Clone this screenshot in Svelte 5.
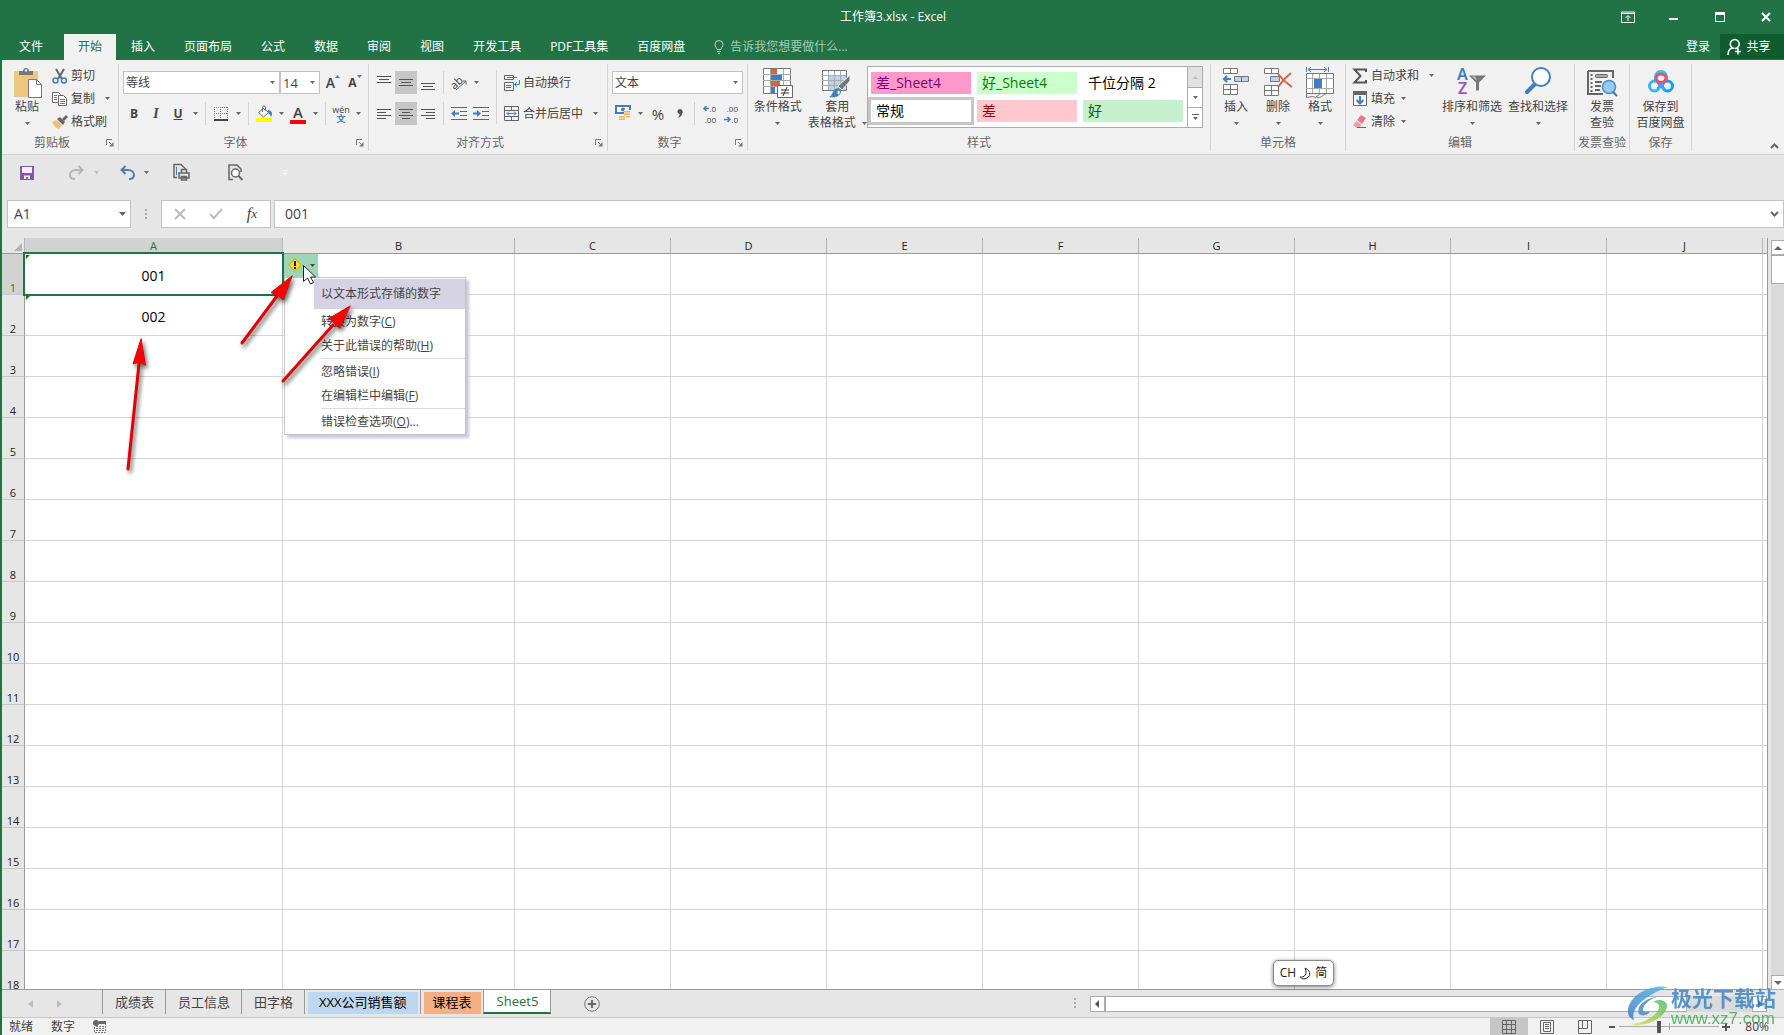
<script>
  const menuTabs = ['插入', '页面布局', '公式', '数据', '审阅', '视图', '开发工具', 'PDF工具集', '百度网盘'];
  const columns = ['A', 'B', 'C', 'D', 'E', 'F', 'G', 'H', 'I', 'J'];
  const rows = Array.from({ length: 18 }, (_, i) => i + 1);
  const cellStyles = [
    { name: '差_Sheet4', kind: 'bad-sheet' },
    { name: '好_Sheet4', kind: 'good-sheet' },
    { name: '千位分隔 2', kind: 'plain' },
    { name: '常规', kind: 'normal' },
    { name: '差', kind: 'bad' },
    { name: '好', kind: 'good' },
  ];
  const sheets = [
    { name: '成绩表', kind: '' },
    { name: '员工信息', kind: '' },
    { name: '田字格', kind: '' },
    { name: 'XXX公司销售额', kind: 'blue' },
    { name: '课程表', kind: 'orange' },
    { name: 'Sheet5', kind: '' },
  ];
  const errorItems = [
    { text: '转换为数字', key: 'C' },
    { text: '关于此错误的帮助', key: 'H', last: true },
    { text: '忽略错误', key: 'I' },
    { text: '在编辑栏中编辑', key: 'F', last: true },
    { text: '错误检查选项', key: 'O', more: '...' },
  ];

  let cells = $state({ A1: '001', A2: '002' });
  let activeSheet = $state('Sheet5');
  let zoom = $state(80);
  let menuOpen = $state(true);
</script>

{#snippet caret()}
  <svg class="caret" width="5" height="3" viewBox="0 0 5 3"><path d="M0 0h5L2.500 3z" fill="currentColor" /></svg>
{/snippet}

{#snippet launcher()}
  <button class="launcher" aria-label="更多">
    <svg width="8" height="8" viewBox="0 0 8 8"><path d="M.5 6V.5H6M3 3l3 3" fill="none" stroke="#777" /><path d="M7.500 3v4.500H3z" fill="#777" /></svg>
  </button>
{/snippet}

{#snippet lines(list)}
  <svg width="14" height="14" viewBox="0 0 14 14">
    {#each list as [x, y, w]}
      <rect {x} {y} width={w} height="1" fill="#555" />
    {/each}
  </svg>
{/snippet}

<div class="excel">
  <header class="titlebar">
    <span></span>
    <h1>工作簿3.xlsx - Excel</h1>
    <div class="window-buttons">
      <button aria-label="功能区显示选项"><svg width="14" height="12" viewBox="0 0 14 12" fill="none" stroke="#fff"><path d="M.5 1h13v10.500H.5zM0 2.500h14M7 10V5M4.500 7 7 4.500 9.500 7" /></svg></button>
      <button aria-label="最小化"><svg width="14" height="12" viewBox="0 0 14 12"><path d="M2 7h9v2H2z" fill="#fff" /></svg></button>
      <button aria-label="最大化"><svg width="14" height="12" viewBox="0 0 14 12"><path d="M2.500 1.500h9v9h-9z" fill="none" stroke="#fff" /><path d="M2 1h10v3H2z" fill="#fff" /></svg></button>
      <button aria-label="关闭"><svg width="14" height="12" viewBox="0 0 14 12"><path d="M3 2l8 8M11 2l-8 8" stroke="#fff" stroke-width="2" /></svg></button>
    </div>
  </header>

  <nav class="tabs">
    <button class="file">文件</button>
    <button class="active">开始</button>
    {#each menuTabs as tab}
      <button>{tab}</button>
    {/each}
    <button class="tell">
      <svg width="10" height="14" viewBox="0 0 10 14" fill="none" stroke="#b7d3c3"><path d="M3 9.500C3 7.500 1 7 1 4.500a4 4 0 0 1 8 0C9 7 7 7.500 7 9.500zM3 11.500h4M4 13.500h2" /></svg>
      告诉我您想要做什么...
    </button>
    <button class="login">登录</button>
    <button class="share">
      <svg width="15" height="18" viewBox="0 0 15 18" fill="none" stroke="#fff" stroke-width="1.500"><path d="M7.500 10.500a4.500 4.500 0 1 1 .5 0M5 10c-3 1-4 3-4 7M10 9.500l1 1M11 10.500v6M8 13.500h6" /></svg>
      共享
    </button>
  </nav>

  <section class="ribbon">
    <div class="group clipboard">
      <div class="body">
        <button class="large">
          <svg width="28" height="32" viewBox="-1 0 28 32">
            <path d="M0 4h24v26H0z" fill="#edc87e" /><path d="M5 8V4h4c0-4 6-4 6 0h4v4z" fill="#777" /><circle cx="12" cy="3.500" r="1.200" fill="#f1f1f1" />
            <path d="M14.500 12.500h8l5 5v13h-13z" fill="#fff" stroke="#777" /><path d="M22.500 12.500v5h5" fill="none" stroke="#777" />
          </svg>
          <span>粘贴</span>
          <span>{@render caret()}</span>
        </button>
        <div class="stack">
          <button class="small">
            <svg width="16" height="16" viewBox="0 0 16 16"><path d="M4 1l6 10M12 1L6 11" stroke="#666" stroke-width="2" /><circle cx="3.500" cy="12.500" r="2.500" fill="none" stroke="#3f7fc0" stroke-width="1.500" /><circle cx="12" cy="12.500" r="2.500" fill="none" stroke="#3f7fc0" stroke-width="1.500" /></svg>
            剪切
          </button>
          <button class="small">
            <svg width="16" height="16" viewBox="0 0 16 16"><path d="M.5 1.500h6l2 2v8h-8z" fill="#fff" stroke="#666" /><path d="M2 4.500h3M2 6.500h3M2 8.500h3" stroke="#3f7fc0" /><path d="M6.500 4.500h5l3 3v7h-8z" fill="#fff" stroke="#666" /><path d="M8 8.500h5M8 10.500h5M8 12.500h5" stroke="#3f7fc0" /></svg>
            复制 <i class="wide-caret">{@render caret()}</i>
          </button>
          <button class="small">
            <svg width="16" height="16" viewBox="0 0 16 16"><path d="M0 8l4-2 6 5-3 4c-2 0-5-3-7-7z" fill="#edc07a" /><path d="M5 5l3-2 5 5-2 3z" fill="#666" /><path d="M10 5l4-4 2 2-4 4z" fill="#666" /></svg>
            格式刷
          </button>
        </div>
      </div>
      <div class="label"><span>剪贴板</span>{@render launcher()}</div>
    </div>

    <div class="group font">
      <div class="body two">
        <div class="row">
          <label class="combo face"><select aria-label="字体"><option>等线</option></select>{@render caret()}</label>
          <label class="combo size"><select aria-label="字号"><option>14</option></select>{@render caret()}</label>
          <button class="icon grow" aria-label="增大字号"><b>A</b><svg width="5" height="3" viewBox="0 0 5 3"><path d="M0 3h5L2.500 0z" fill="#3f7fc0" /></svg></button>
          <button class="icon shrink" aria-label="减小字号"><b>A</b><svg width="5" height="3" viewBox="0 0 5 3"><path d="M0 0h5L2.500 3z" fill="#3f7fc0" /></svg></button>
        </div>
        <div class="row">
          <button class="icon"><b>B</b></button>
          <button class="icon"><b class="italic">I</b></button>
          <button class="icon"><b class="under">U</b></button>
          <button class="drop" aria-label="下划线">{@render caret()}</button>
          <i class="sep"></i>
          <button class="icon" aria-label="边框"><svg width="14" height="14" viewBox="0 0 14 14"><path d="M.5 0v13M13.500 0v13M0 .5h14M6.500 0v13M0 6.500h14" stroke="#777" stroke-dasharray="1 1" /><path d="M0 13h14" stroke="#444" stroke-width="2" /></svg></button>
          <button class="drop" aria-label="边框样式">{@render caret()}</button>
          <i class="sep"></i>
          <button class="icon" aria-label="填充颜色"><svg width="17" height="16" viewBox="0 0 17 16"><path d="M2.500 6.500l5-4 5 4-5 4.500z" fill="#fff" stroke="#666" /><path d="M6.500 6V1.500c0-2 3-2 3 0V4" fill="none" stroke="#666" /><path d="M12 4c4 0 5 4 3 7-1-2-1-3-3-4z" fill="#3f7fc0" /><path d="M0 12h16v4H0z" fill="#ff0" /></svg></button>
          <button class="drop" aria-label="选择填充颜色">{@render caret()}</button>
          <button class="icon color" aria-label="字体颜色"><b>A</b></button>
          <button class="drop" aria-label="选择字体颜色">{@render caret()}</button>
          <i class="sep"></i>
          <button class="icon pinyin"><small>wén</small><small>文</small></button>
          <button class="drop" aria-label="拼音">{@render caret()}</button>
        </div>
      </div>
      <div class="label"><span>字体</span>{@render launcher()}</div>
    </div>

    <div class="group align">
      <div class="body">
        <div class="two">
          <div class="row">
            <button class="icon" aria-label="顶端对齐">{@render lines([[0, 0, 14], [2, 3, 10], [0, 6, 14]])}</button>
            <button class="icon on" aria-label="垂直居中">{@render lines([[0, 3, 14], [2, 6, 10], [0, 9, 14]])}</button>
            <button class="icon" aria-label="底端对齐">{@render lines([[0, 7, 14], [2, 10, 10], [0, 13, 14]])}</button>
            <i class="sep"></i>
            <button class="icon" aria-label="方向"><svg width="18" height="16" viewBox="0 0 18 16"><text x="0" y="12" transform="rotate(-42 6 8)" font-size="11" font-family="Noto Sans, sans-serif" fill="#444">ab</text><path d="M6 15L16 6M12.500 6H16v3.500" fill="none" stroke="#666" /></svg></button>
            <button class="drop" aria-label="文字方向">{@render caret()}</button>
          </div>
          <div class="row">
            <button class="icon" aria-label="左对齐">{@render lines([[0, 2, 14], [0, 5, 9], [0, 8, 14], [0, 11, 9]])}</button>
            <button class="icon on" aria-label="居中">{@render lines([[0, 2, 14], [3, 5, 8], [0, 8, 14], [3, 11, 8]])}</button>
            <button class="icon" aria-label="右对齐">{@render lines([[0, 2, 14], [5, 5, 9], [0, 8, 14], [5, 11, 9]])}</button>
            <i class="sep"></i>
            <button class="icon" aria-label="减少缩进"><svg width="16" height="14" viewBox="0 0 16 14"><path d="M0 .5h16M9 4.500h7M9 8.500h7M0 12.500h16" stroke="#666" /><path d="M0 6.500l4-3.500v2.500h4v2H4V10z" fill="#3f7fc0" /></svg></button>
            <button class="icon" aria-label="增加缩进"><svg width="16" height="14" viewBox="0 0 16 14"><path d="M0 .5h16M9 4.500h7M9 8.500h7M0 12.500h16" stroke="#666" /><path d="M8 6.500L4 3v2.500H0v2h4V10z" fill="#3f7fc0" /></svg></button>
          </div>
        </div>
        <i class="sep tall"></i>
        <div class="two">
          <button class="small">
            <svg width="16" height="16" viewBox="0 0 16 16" fill="none" stroke="#666"><path d="M.5.5h9v4h-9zM.5 7.500h9v8h-9zM2 10.500h5M2 12.500h5" /><path d="M3 2.500h10M15.500 5v4.500h-5M13 7l-2.500 2.500L13 12" stroke="#3f7fc0" /></svg>
            自动换行
          </button>
          <button class="small">
            <svg width="16" height="16" viewBox="0 0 16 16" fill="none" stroke="#666"><path d="M.5.5h14v14H.5zM0 4.500h15M0 10.500h15M7.500 1v3M7.500 11v3" /><path d="M3 7.500h9M5 5.500l-2 2 2 2M10 5.500l2 2-2 2" stroke="#3f7fc0" /></svg>
            合并后居中 <i class="wide-caret">{@render caret()}</i>
          </button>
        </div>
      </div>
      <div class="label"><span>对齐方式</span>{@render launcher()}</div>
    </div>

    <div class="group number">
      <div class="body two">
        <label class="combo"><select aria-label="数字格式"><option>文本</option></select>{@render caret()}</label>
        <div class="row">
          <button class="icon" aria-label="会计数字格式"><svg width="17" height="17" viewBox="0 0 17 17"><path d="M0 0h16v9H0z" fill="#3f7fc0" /><path d="M2 2h12v5H2z" fill="#fff" /><circle cx="8" cy="4.500" r="2" fill="#3f7fc0" /><path d="M9 5h7v6H9zM4 10h7v6H4z" fill="#f1f1f1" /><path d="M9 6h6v1.500H9zM9 8.500h6V10H9zM4 11h6v1.500H4zM4 13.500h6V15H4zM11 11h4v1.500h-4z" fill="#e3b45f" /></svg></button>
          <button class="drop" aria-label="货币">{@render caret()}</button>
          <button class="icon percent">%</button>
          <button class="icon comma" aria-label="千位分隔样式"><svg width="6" height="10" viewBox="0 0 6 10"><circle cx="3" cy="2.500" r="2.500" fill="#555" /><path d="M5.500 2.500C5.500 6 4 8 1 9c1-1.500 2-3 1.500-4.500z" fill="#555" /></svg></button>
          <i class="sep"></i>
          <button class="icon decimals" aria-label="增加小数位数"><span><svg width="6" height="7" viewBox="0 0 6 7"><path d="M6 3.500H1M3.500 1L1 3.500 3.500 6" stroke="#3f7fc0" fill="none" stroke-width="1.500" /></svg>.0</span><span>.00</span></button>
          <button class="icon decimals" aria-label="减少小数位数"><span>.00</span><span><svg width="7" height="7" viewBox="0 0 7 7"><path d="M0 3.500h5M3.500 1L6 3.500 3.500 6" stroke="#3f7fc0" fill="none" stroke-width="1.500" /></svg>.0</span></button>
        </div>
      </div>
      <div class="label"><span>数字</span>{@render launcher()}</div>
    </div>

    <div class="group styles">
      <div class="body">
        <button class="large">
          <svg width="30" height="32" viewBox="0 0 30 32">
            <path d="M.5 1.500h27v25H.5z" fill="#fff" stroke="#777" />
            <path d="M0 7.500h28M0 13.500h28M0 19.500h28M7.500 2v24M20.500 2v24" stroke="#aaa" />
            <path d="M8 2h6v5H8zM8 14h9v5H8z" fill="#db6141" /><path d="M8 8h11v5H8zM8 20h4v6H8z" fill="#3f7fc0" />
            <path d="M14.500 18.500h15v12h-15z" fill="#fff" stroke="#666" /><path d="M18 23h8M18 26h8M24 20l-4 9" stroke="#333" />
          </svg>
          <span>条件格式</span>
          <span>{@render caret()}</span>
        </button>
        <button class="large table-format">
          <svg width="30" height="32" viewBox="0 0 30 32">
            <path d="M.5 3.500h24v20H.5z" fill="#fff" stroke="#777" /><path d="M7 8h17v15H7z" fill="#bdd3ea" />
            <path d="M0 8.500h24M0 13.500h24M0 18.500h24M6.500 4v19M12.500 4v19M18.500 4v19" stroke="#aaa" />
            <path d="M28 8v6l-8 9-4-4z" fill="#777" stroke="#f1f1f1" /><path d="M7 30c4-1 3-8 9-9 4 1 4 6 0 8-3 2-6 1-9 1z" fill="#3f7fc0" /><path d="M16 24c1 1 1 2 0 3" stroke="#fff" fill="none" stroke-width="2" />
          </svg>
          <span>套用</span>
          <span>表格格式 {@render caret()}</span>
        </button>
        <div class="gallery">
          <div class="swatches">
            {#each cellStyles as style}
              <button class="swatch {style.kind}">{style.name}</button>
            {/each}
          </div>
          <div class="gallery-nav">
            <button disabled aria-label="上一行"><svg width="5" height="3" viewBox="0 0 5 3"><path d="M0 3h5L2.500 0z" fill="#bbb" /></svg></button>
            <button aria-label="下一行">{@render caret()}</button>
            <button aria-label="其他"><svg width="7" height="7" viewBox="0 0 7 7"><path d="M0 0h7v1H0zM1 3h5L3.500 6z" fill="#666" /></svg></button>
          </div>
        </div>
      </div>
      <div class="label"><span>样式</span></div>
    </div>

    <div class="group cells">
      <div class="body">
        <button class="large">
          <svg width="28" height="32" viewBox="0 0 28 32" fill="#fff" stroke="#777"><path d="M1.500 1.500h14v5h-14zM8.500 1.500v5M1.500 17.500h14v10h-14zM8.500 17.500v10M1.500 22.500h14" /><path d="M12.500 9.500h14v5h-14zM19.500 9.500v5" fill="#bdd3ea" /><path d="M2 12h7M5 9l-3 3 3 3" stroke="#3f7fc0" stroke-width="2" fill="none" /></svg>
          <span>插入</span>
          <span>{@render caret()}</span>
        </button>
        <button class="large">
          <svg width="30" height="32" viewBox="0 0 30 32" fill="#fff" stroke="#777"><path d="M1.500 1.500h14v5h-14zM8.500 1.500v5M1.500 18.500h14v10h-14zM8.500 18.500v10M1.500 23.500h14" /><path d="M7.500 9.500h9v5h-9z" fill="#bdd3ea" /><path d="M15 7c4 5 8 9 14 13M28 6c-5 4-9 8-13 14" stroke="#db6141" stroke-width="2" fill="none" /></svg>
          <span>删除</span>
          <span>{@render caret()}</span>
        </button>
        <button class="large">
          <svg width="28" height="32" viewBox="0 0 28 32" fill="#fff" stroke="#777"><path d="M.5 6.500h27v20H.5z" /><path d="M0 11.500h28M0 21.500h28M6.500 7v19M20.500 7v19M13.500 7v19" stroke="#aaa" fill="none" /><path d="M8 12h8v9H8z" fill="#3f7fc0" stroke="none" /><path d="M.5 26.500v4l6-1 3 1 4-3M10.500 30.500c5 1 6-3 9-3" fill="none" /><path d="M.5 0v5M22.500 0v5M2 2.500h19M5 0L2 2.500 5 5M18 0l3 2.500L18 5" stroke="#3f7fc0" fill="none" /></svg>
          <span>格式</span>
          <span>{@render caret()}</span>
        </button>
      </div>
      <div class="label"><span>单元格</span></div>
    </div>

    <div class="group editing">
      <div class="body">
        <div class="stack">
          <button class="small"><svg width="16" height="16" viewBox="0 0 16 16"><path d="M14 4V1.500H2.500L8.500 8l-6 6.500H14V12" fill="none" stroke="#555" stroke-width="2" /></svg>自动求和 <i class="wide-caret">{@render caret()}</i></button>
          <button class="small"><svg width="16" height="16" viewBox="0 0 16 16"><path d="M1.500 1.500h13v13h-13z" fill="#fff" stroke="#666" /><path d="M1 0h14v4H1z" fill="#666" /><path d="M8 5v7M4.500 9L8 12.500 11.500 9" fill="none" stroke="#3f7fc0" stroke-width="2" /></svg>填充 <i>{@render caret()}</i></button>
          <button class="small"><svg width="16" height="16" viewBox="0 0 16 16"><path d="M9 1l5 3-4 6-5-4z" fill="#e8788c" /><path d="M4.500 7l5 4-2 2.500H4L1 11z" fill="#eba0ae" /><path d="M5 13.500h9" stroke="#666" /></svg>清除 <i>{@render caret()}</i></button>
        </div>
        <button class="large">
          <svg width="30" height="32" viewBox="0 0 30 32"><g font-family="Noto Sans, sans-serif" font-size="16" font-weight="600"><text x="0" y="13" fill="#3f7fc0">A</text><text x="1" y="27" fill="#9b57b8">Z</text></g><path d="M12 8.500h17l-7 7v8h-3v-8z" fill="#777" /><path d="M15 9.500h3l2 4z" fill="#ccc" /></svg>
          <span>排序和筛选</span>
          <span>{@render caret()}</span>
        </button>
        <button class="large">
          <svg width="30" height="32" viewBox="0 0 30 32"><path d="M12 17L4 25" stroke="#3f7fc0" stroke-width="4" stroke-linecap="round" /><circle cx="18" cy="10" r="9" fill="#fff" stroke="#3f7fc0" stroke-width="2" /></svg>
          <span>查找和选择</span>
          <span>{@render caret()}</span>
        </button>
      </div>
      <div class="label"><span>编辑</span></div>
    </div>

    <div class="group invoice">
      <div class="body">
        <button class="large">
          <svg width="32" height="32" viewBox="0 0 32 32" fill="none" stroke="#666"><path d="M2 4h25v7M2 4v23h15" stroke-width="2" /><path d="M5.500 7v18" stroke-dasharray="2 2" stroke-width="2" /><rect x="9.500" y="7.500" width="12" height="3" rx="1" fill="#aaa" /><path d="M9 15h7M9 19h6M9 23h5" stroke-width="2" /><circle cx="23" cy="20" r="6.500" fill="#9ac8f5" stroke="#4a8fc7" stroke-width="1.500" /><path d="M27 25l4 4" stroke="#4a6f9a" stroke-width="2" /></svg>
          <span>发票</span>
          <span>查验</span>
        </button>
      </div>
      <div class="label"><span>发票查验</span></div>
    </div>

    <div class="group save">
      <div class="body">
        <button class="large">
          <svg width="28" height="32" viewBox="0 0 28 32" fill="none" stroke-width="3"><circle cx="7.500" cy="19" r="5" stroke="#35b5f3" /><circle cx="20.500" cy="19" r="5" stroke="#149df6" /><path d="M11 15.500l7 7.500M17 15.500L10.500 22" stroke="#36aaf2" /><path d="M8.500 13V10a5.500 5.500 0 0 1 11 0v3" stroke="#2ac4f2" /><path d="M9 11c1 6 9 6 10 0a5 4 0 0 0-10 0" stroke="#ef4d6c" /></svg>
          <span>保存到</span>
          <span>百度网盘</span>
        </button>
      </div>
      <div class="label"><span>保存</span></div>
    </div>
    <button class="collapse" aria-label="折叠功能区"><svg width="9" height="6" viewBox="0 0 9 6"><path d="M1 5l3.500-3.500L8 5" fill="none" stroke="#666" stroke-width="2" /></svg></button>
  </section>

  <div class="quick">
    <button aria-label="保存"><svg width="16" height="16" viewBox="0 0 16 16"><path d="M1 1h14v14H1z" fill="#8a55ae" /><path d="M3 2h10v6H3zM5 10.500h6V14H9v-2H7v2H5z" fill="#f4eef8" /></svg></button>
    <button class="redo" aria-label="恢复"><svg width="16" height="14" viewBox="0 0 16 14"><path d="M13 4H7C3 4 1 6.500 1 9s2 4 5 4M9.500 0l4 4-4 4" fill="none" stroke="#b5b5b5" stroke-width="2" /></svg>{@render caret()}</button>
    <button class="undo" aria-label="撤消"><svg width="16" height="14" viewBox="0 0 16 14"><path d="M3 4h6c4 0 6 2.500 6 5s-2 4-5 4M6.500 0l-4 4 4 4" fill="none" stroke="#4a7fb8" stroke-width="2" /></svg>{@render caret()}</button>
    <button class="print" aria-label="快速打印"><svg width="18" height="17" viewBox="0 0 18 17" fill="none" stroke="#666"><path d="M4 13.500H1V.500h7l4 4V7" stroke-width="1.500" /><path d="M3.500 3v8" stroke="#3f7fc0" /><path d="M6 9h10v5H6zM8.500 5.500h5V9h-5zM8.500 12.500h5v3.500h-5z" fill="#e6e6e6" stroke-width="1.500" /></svg></button>
    <button class="preview" aria-label="打印预览"><svg width="16" height="17" viewBox="0 0 16 17" fill="none" stroke="#666"><path d="M5 15.500H1V1h8l4 4v3" stroke-width="1.500" /><circle cx="7.500" cy="9" r="4" fill="#fff" stroke-width="1.500" /><path d="M10.500 12l4 4" stroke-width="2" /></svg></button>
    <button class="more" aria-label="自定义快速访问工具栏"><svg width="6" height="6" viewBox="0 0 6 6"><path d="M0 0h6v1H0zM0 2.500h6L3 5.500z" fill="#f4f4f4" /></svg></button>
  </div>

  <div class="formula">
    <label class="combo name"><input aria-label="名称框" value="A1" /><svg class="caret" width="7" height="4" viewBox="0 0 7 4"><path d="M0 0h7L3.500 4z" fill="#666" /></svg></label>
    <svg class="grip" width="2" height="11" viewBox="0 0 2 11"><path d="M0 0h2v2H0zM0 4h2v2H0zM0 8h2v2H0z" fill="#aaa" /></svg>
    <div class="entry">
      <button aria-label="取消"><svg width="12" height="12" viewBox="0 0 12 12"><path d="M1 1l10 10M11 1L1 11" stroke="#bbb" stroke-width="2" /></svg></button>
      <button aria-label="输入"><svg width="14" height="12" viewBox="0 0 14 12"><path d="M1 6l4 4 8-9" fill="none" stroke="#bbb" stroke-width="2" /></svg></button>
      <button class="fx">f<small>x</small></button>
    </div>
    <label class="combo value"><input aria-label="编辑栏" bind:value={cells.A1} /><svg class="caret" width="9" height="6" viewBox="0 0 9 6"><path d="M1 1l3.500 3.500L8 1" fill="none" stroke="#666" stroke-width="2" /></svg></label>
  </div>

  <main class="sheet">
    <div class="grid">
      <table>
        <colgroup>
          <col class="c-head" />
          {#each columns as col}
            <col class="c-{col}" />
          {/each}
          <col />
        </colgroup>
        <thead>
          <tr>
            <th class="corner"><svg width="8" height="8" viewBox="0 0 8 8"><path d="M8 0v8H0z" fill="#b5b5b5" /></svg></th>
            {#each columns as col}
              <th class:current={col === 'A'}>{col}</th>
            {/each}
            <th></th>
          </tr>
        </thead>
        <tbody>
          {#each rows as row}
            <tr>
              <th class:current={row === 1}>{row}</th>
              {#each columns as col}
                <td class:selected={col + row === 'A1'} class:text-number={cells[col + row]}>
                  {cells[col + row] ?? ''}
                  {#if col + row === 'B1'}
                    <div class="tag">
                      <button class="tag-button" aria-label="错误检查" onclick={() => (menuOpen = !menuOpen)}>
                        <svg width="14" height="14" viewBox="0 0 14 14"><path d="M7 .7L13.300 7 7 13.300.7 7z" fill="#fddb26" stroke="#d9a400" /><path d="M6 3h2v5H6zM6 9h2v2H6z" fill="#222" /></svg>
                        {@render caret()}
                      </button>
                      {#if menuOpen}
                        <div class="menu">
                          <div class="menu-title">以文本形式存储的数字</div>
                          {#each errorItems as item}
                            <button class:last={item.last}>{item.text}(<u>{item.key}</u>){item.more ?? ''}</button>
                          {/each}
                        </div>
                      {/if}
                    </div>
                  {/if}
                </td>
              {/each}
              <td></td>
            </tr>
          {/each}
        </tbody>
      </table>
    </div>
    <div class="vscroll">
      <button aria-label="向上滚动"><svg width="8" height="4" viewBox="0 0 8 4"><path d="M0 4h8L4 0z" fill="#666" /></svg></button>
      <div class="thumb"></div>
      <button class="end" aria-label="向下滚动"><svg width="8" height="4" viewBox="0 0 8 4"><path d="M0 0h8L4 4z" fill="#666" /></svg></button>
    </div>

    <!-- mouse pointer and red arrows drawn on top of the cells -->
    <svg class="arrows" width="380" height="240" viewBox="0 0 380 240">
      <path d="M301.500 27.500v16l4-3.500 3 6 3-1.500-3-5.500h5z" fill="#fff" stroke="#222" />
      <g class="red" fill="#f00" stroke="#e00000" stroke-width="3" stroke-linecap="round">
        <path d="M240 105L275 58M281 143L331 87M126 231L137 126" />
        <path d="M290 38l-21 16.500 6 2.500 1.500 1 4.500 3.500zM348 68l-21 12.500 5 4.500 5.500 5zM139 101l-8 25 6-2 6 3z" stroke-width="1" />
      </g>
    </svg>
    <div class="ime">CH <svg width="11" height="13" viewBox="0 0 11 13"><path d="M5 1c7 3 6 10-1 11-2 0-3-1-4-2 4 1 8-3 5-9z" fill="none" stroke="#222" /></svg> 简</div>
  </main>

  <div class="sheetbar">
    <div class="sheet-nav">
      <button aria-label="上一个工作表"><svg width="5" height="8" viewBox="0 0 5 8"><path d="M5 0v8L0 4z" fill="#bdbdbd" /></svg></button>
      <button aria-label="下一个工作表"><svg width="5" height="8" viewBox="0 0 5 8"><path d="M0 0v8l5-4z" fill="#bdbdbd" /></svg></button>
    </div>
    {#each sheets as sheet}
      <button class="sheet-tab {sheet.kind}" class:active={sheet.name === activeSheet} onclick={() => (activeSheet = sheet.name)}><span>{sheet.name}</span></button>
    {/each}
    <button class="add" aria-label="新工作表"><svg width="16" height="16" viewBox="0 0 16 16"><circle cx="8" cy="8" r="7.300" fill="none" stroke="#777" /><path d="M4 8h8M8 4v8" stroke="#666" stroke-width="2" /></svg></button>
    <svg class="grip push" width="2" height="11" viewBox="0 0 2 11"><path d="M0 0h2v2H0zM0 4h2v2H0zM0 8h2v2H0z" fill="#aaa" /></svg>
    <div class="hscroll">
      <button aria-label="向左滚动"><svg width="4" height="8" viewBox="0 0 4 8"><path d="M4 0v8L0 4z" fill="#555" /></svg></button>
      <div class="thumb"></div>
      <button class="end" aria-label="向右滚动"><svg width="4" height="8" viewBox="0 0 4 8"><path d="M0 0v8l4-4z" fill="#555" /></svg></button>
    </div>
  </div>

  <footer class="status">
    <span>就绪</span>
    <span>数字</span>
    <svg width="13" height="13" viewBox="0 0 13 13"><circle cx="3" cy="3" r="3" fill="#666" /><path d="M6 1h7v3H6z" fill="#666" /><path d="M1.500 7v5.500h11V4M3 6.500h8M3 8.500h8M3 10.500h8" fill="none" stroke="#777" stroke-dasharray="2 1" /></svg>
    <div class="views">
      <button class="on" aria-label="普通"><svg width="14" height="14" viewBox="0 0 14 14" fill="none" stroke="#666"><path d="M.5.5h13v13H.5zM.5 4.500h13M.5 9.500h13M4.500.5v13M9.500.5v13" /></svg></button>
      <button aria-label="页面布局"><svg width="14" height="14" viewBox="0 0 14 14" fill="none" stroke="#666"><path d="M.5.5h13v13H.5zM3.500 2.500h7v9h-7zM5 4.500h4M5 6.500h4M5 8.500h4" /></svg></button>
      <button aria-label="分页预览"><svg width="14" height="14" viewBox="0 0 14 14" fill="none" stroke="#666"><path d="M.5.5h13v13H.5zM1 8.500h8.500V1M4.500 1v7" /></svg></button>
    </div>
    <button class="step" aria-label="缩小"><svg width="8" height="8" viewBox="0 0 8 8"><path d="M1 3h6v2H1z" fill="#555" /></svg></button>
    <input type="range" min="10" max="190" aria-label="缩放" bind:value={zoom} />
    <button class="step" aria-label="放大"><svg width="8" height="8" viewBox="0 0 8 8"><path d="M0 3h8v2H0zM3 0h2v8H3z" fill="#555" /></svg></button>
    <span class="percent-value">{zoom}%</span>
  </footer>

  <div class="watermark">
    <svg width="42" height="42" viewBox="0 0 42 42">
      <defs>
        <linearGradient id="sky" x1="0" y1="1" x2="1" y2="0"><stop offset="0" stop-color="#3b7fc4" /><stop offset="1" stop-color="#5ebbe8" /></linearGradient>
        <linearGradient id="leaf" x1="0" y1="1" x2="1" y2="0"><stop offset="0" stop-color="#e8e04a" /><stop offset="1" stop-color="#4fb96f" /></linearGradient>
      </defs>
      <path d="M41 2C24-1 4 9 1 24c-1 7 3 10 6 11C3 24 17 11 41 2z" fill="url(#sky)" />
      <path d="M3 39c16 4 35-6 37-17 1-7-9-9-14-5 9 1 7 9 0 14-6 5-15 8-23 8z" fill="url(#leaf)" />
      <path d="M30 12c-12 1-21 9-18 17 3 3 10 1 11-3-5 2-8 1-7-2 1-5 7-10 14-12z" fill="#4a8fcb" />
    </svg>
    <div><strong>极光下载站</strong><em>www.xz7.com</em></div>
  </div>
</div>

<style>
  :global(body) {
    margin: 0;
  }
  .excel, .excel * {
    box-sizing: border-box;
  }
  .excel {
    position: relative;
    display: flex;
    flex-direction: column;
    height: 100vh;
    overflow: hidden;
    border-left: 2px solid #217346;
    background: #e6e6e6;
    color: #444;
    font: 12px/16px "Open Sans", "Noto Sans CJK SC", sans-serif;
    white-space: nowrap;
  }
  button, input, select {
    margin: 0;
    padding: 0;
    border: 0;
    background: none;
    color: inherit;
    font: inherit;
  }
  button {
    display: flex;
    align-items: center;
    justify-content: center;
  }
  svg {
    flex: none;
    display: block;
    overflow: visible;
  }
  i {
    font-style: normal;
  }
  .caret {
    color: #666;
  }

  /* title and tabs */
  .titlebar {
    display: grid;
    grid-template-columns: 1fr auto 1fr;
    align-items: center;
    height: 34px;
    background: #217346;
    color: #fff;
  }
  h1 {
    margin: 0;
    font-size: 12px;
    font-weight: 400;
  }
  .window-buttons {
    display: flex;
    justify-content: flex-end;
    padding-right: 11px;
    gap: 32px;
  }
  .tabs {
    display: flex;
    height: 26px;
    gap: 1px;
    background: #217346;
    color: #fff;
  }
  .tabs button {
    padding: 0 14px;
  }
  .tabs .file {
    padding: 0 20px 0 17px;
  }
  .tabs .active {
    background: #f1f1f1;
    color: #217346;
  }
  .tabs .tell {
    gap: 6px;
    color: #a6c9b5;
  }
  .tabs .login {
    margin-left: auto;
    padding: 0 9px;
  }
  .tabs .share {
    width: 64px;
    padding: 0 6px 0 0;
    gap: 4px;
    margin-bottom: 1px;
    background: #0e5c2f;
  }

  /* ribbon */
  .ribbon {
    display: flex;
    height: 95px;
    padding: 4px 0 3px;
    border-bottom: 1px solid #d2d2d2;
    background: #f1f1f1;
  }
  .group {
    display: flex;
    flex-direction: column;
    border-right: 1px solid #d4d4d4;
  }
  .body {
    flex: 1;
    display: flex;
  }
  .label {
    display: flex;
    align-items: center;
    height: 17px;
    padding: 1px 4px 0;
    color: #666;
  }
  .label span {
    flex: 1;
    text-align: center;
  }
  .label span:not(:only-child) {
    padding-right: 8px;
  }
  .clipboard { width: 117px; }
  .font { width: 250px; }
  .align { width: 239px; }
  .number { width: 140px; }
  .styles { width: 463px; }
  .cells { width: 135px; }
  .editing { width: 229px; }
  .invoice { width: 55px; }
  .save { width: 62px; }
  .invoice .label, .save .label {
    padding: 1px 0 0;
  }
  .large {
    flex-direction: column;
    justify-content: flex-start;
    padding-top: 3px;
  }
  .large span {
    display: flex;
    align-items: center;
    height: 16px;
    gap: 6px;
  }
  .clipboard .large {
    width: 50px;
  }
  .stack {
    display: flex;
    flex-direction: column;
  }
  .small {
    justify-content: flex-start;
    height: 23px;
    gap: 3px;
  }
  .small i {
    padding-left: 3px;
  }
  .small .wide-caret {
    padding-left: 7px;
  }
  .two {
    display: flex;
    flex-direction: column;
    gap: 8px;
    padding-top: 7px;
  }
  .font .body, .number .body, .align .body {
    padding-left: 4px;
  }
  .row {
    display: flex;
    height: 23px;
  }
  .icon {
    width: 22px;
  }
  .icon.on {
    background: #c6c6c6;
  }
  .drop {
    width: 12px;
  }
  .sep {
    width: 1px;
    margin: 0 4px;
    background: #d4d4d4;
  }
  .align .tall {
    margin: 6px 7px 10px 4px;
  }
  .combo {
    display: grid;
    align-items: center;
    height: 23px;
    border: 1px solid #c3c3c3;
    background: #fff;
  }
  .combo > :global(*) {
    grid-area: 1 / 1;
  }
  .combo select, .combo input {
    width: 100%;
    padding-left: 2px;
    appearance: none;
    outline: none;
  }
  .combo .caret {
    justify-self: end;
    margin-right: 4px;
    pointer-events: none;
  }
  .face {
    width: 157px;
  }
  .size {
    width: 40px;
    margin-right: 2px;
  }
  .size select {
    font-size: 13px;
  }
  .number .combo {
    width: 131px;
  }
  .grow, .shrink {
    align-items: flex-start;
    padding-top: 4px;
  }
  .grow b {
    font-size: 14px;
    font-weight: 600;
  }
  b.italic {
    font-family: "Liberation Serif", serif;
    font-size: 14px;
    font-style: italic;
  }
  b.under {
    text-decoration: underline;
  }
  .color b {
    height: 20px;
    width: 16px;
    border-bottom: 4px solid #f00;
    font-size: 15px;
    font-weight: 600;
    line-height: 16px;
  }
  .pinyin {
    flex-direction: column;
  }
  .pinyin small {
    font-size: 9px;
    line-height: 9px;
  }
  .pinyin small + small {
    color: #3f7fc0;
    font-weight: 700;
  }
  .percent {
    width: 24px;
    font-size: 15px;
  }
  .comma {
    width: 20px;
  }
  .decimals {
    flex-direction: column;
    align-items: flex-end;
    padding-right: 5px;
    font-size: 8px;
    line-height: 11px;
  }
  .decimals span {
    display: flex;
    align-items: center;
  }
  .styles .large {
    width: 60px;
  }
  .gallery {
    display: flex;
    height: 62px;
    margin: 2px 7px 0 auto;
    border: 1px solid #ababab;
    background: #fff;
  }
  .swatches {
    display: grid;
    grid-template-columns: repeat(3, 100px);
    grid-template-rows: 22px 22px;
    gap: 6px;
    padding: 5px 4px 5px 3px;
  }
  .swatch {
    justify-content: flex-start;
    padding-left: 5px;
    font-size: 14px;
    color: #000;
  }
  .bad-sheet { background: #ff99cc; color: #800080; }
  .good-sheet { background: #ccffcc; color: #008000; }
  .bad { background: #ffc7ce; color: #9c0006; }
  .good { background: #c6efce; color: #006100; }
  .normal { outline: 3px solid #c6c6c6; }
  .gallery-nav {
    display: grid;
    grid-template-rows: repeat(3, 1fr);
    width: 15px;
    border-left: 1px solid #ababab;
  }
  .gallery-nav button + button {
    border-top: 1px solid #ababab;
  }
  .gallery-nav button:disabled {
    background: #e1e1e1;
  }
  .cells .body {
    padding-left: 4px;
  }
  .cells .large {
    width: 42px;
  }
  .editing .stack {
    width: 93px;
    padding-left: 6px;
  }
  .editing .large {
    width: 66px;
  }
  .invoice .large, .save .large {
    flex: 1;
  }
  .collapse {
    align-self: flex-end;
    margin: 0 5px 2px auto;
  }

  /* quick access */
  .quick {
    display: flex;
    height: 35px;
    padding-left: 17px;
  }
  .quick button {
    gap: 9px;
  }
  .quick .redo {
    margin-left: 34px;
  }
  .quick .redo .caret {
    color: #bbb;
  }
  .quick .undo {
    margin-left: 20px;
  }
  .quick .print {
    margin-left: 24px;
  }
  .quick .preview {
    margin-left: 37px;
  }
  .quick .more {
    margin-left: 38px;
  }

  /* formula bar */
  .formula {
    display: flex;
    align-items: center;
    margin: 10px 0 10px 5px;
    color: #444;
    font-size: 14px;
  }
  .formula .combo {
    height: 28px;
  }
  .formula .name {
    width: 124px;
  }
  .formula .combo input {
    padding-left: 6px;
  }
  .formula .value input {
    padding-left: 10px;
  }
  .grip {
    margin: 0 14px;
  }
  .entry {
    display: flex;
    width: 110px;
    height: 28px;
    margin-right: 3px;
    border: 1px solid #c3c3c3;
    background: #fff;
  }
  .entry button {
    flex: 1;
  }
  .entry .fx {
    font: italic 400 16px/16px "Liberation Serif", serif;
  }
  .formula .value {
    flex: 1;
  }

  /* cells */
  .sheet {
    position: relative;
    flex: 1;
    display: flex;
    min-height: 0;
  }
  .grid {
    flex: 1;
    overflow: hidden;
    border-right: 1px solid #999;
    border-bottom: 1px solid #999;
    background: #fff;
  }
  table {
    width: 100%;
    table-layout: fixed;
    border-collapse: separate;
    border-spacing: 0;
  }
  .c-head { width: 23px; }
  .c-A { width: 258px; }
  .c-B { width: 232px; }
  .c-C, .c-D, .c-E, .c-F, .c-G, .c-H, .c-I, .c-J { width: 156px; }
  th {
    padding: 0;
    background: #e6e6e6;
    color: #222;
    font-size: 11px;
    font-weight: 400;
  }
  thead th {
    height: 16px;
    border-right: 1px solid #b5b5b5;
    border-bottom: 1px solid #999;
    line-height: 15px;
  }
  .corner svg {
    margin: 3px 2px 0 auto;
  }
  thead th:last-child {
    border-right: 0;
  }
  tbody th {
    border-right: 1px solid #999;
    border-bottom: 1px solid #c6c6c6;
    line-height: 12px;
    vertical-align: bottom;
  }
  th.current {
    background: #d2d2d2;
    color: #217346;
  }
  td {
    position: relative;
    height: 41px;
    padding: 4px 0 0;
    border-right: 1px solid #d4d4d4;
    border-bottom: 1px solid #d4d4d4;
    color: #000;
    font-size: 14px;
    text-align: center;
  }
  td:last-child {
    border-right: 0;
  }
  .text-number::before {
    content: "";
    position: absolute;
    top: 1px;
    left: 1px;
    border-top: 4px solid #107c10;
    border-right: 4px solid transparent;
  }
  .selected::after {
    content: "";
    position: absolute;
    inset: -2px;
    border: 2px solid #217346;
  }
  .tag {
    position: absolute;
    top: 0;
    left: 1px;
    z-index: 2;
    color: #444;
    font-size: 12px;
  }
  .tag-button {
    width: 34px;
    height: 24px;
    padding-bottom: 2px;
    gap: 8px;
    background: #9fd5b7;
  }
  .tag-button .caret {
    color: #444;
  }
  .menu {
    display: flex;
    flex-direction: column;
    width: 182px;
    margin-top: -1px;
    padding: 1px 0 0 29px;
    border: 1px solid #c6c6c6;
    background: #fff;
    box-shadow: 3px 3px 3px #c9c4da;
    text-align: left;
  }
  .menu-title {
    padding: 7px;
    background: #d5d3e3;
  }
  .menu button {
    justify-content: flex-start;
    height: 25px;
    margin-left: 7px;
  }
  .menu .last {
    border-bottom: 1px solid #dcdcdc;
  }
  .vscroll {
    display: flex;
    flex-direction: column;
    width: 13px;
    margin: 2px 0 0 3px;
    background: #dadada;
  }
  .vscroll button, .vscroll .thumb {
    height: 15px;
    border: 1px solid #ababab;
    border-right: 0;
    background: #fff;
  }
  .vscroll .thumb {
    height: 29px;
  }
  .vscroll .end {
    margin-top: auto;
  }
  .arrows {
    position: absolute;
    top: 0;
    left: 0;
    z-index: 3;
    pointer-events: none;
  }
  .red {
    filter: drop-shadow(2px 3px 2px #0009);
  }
  .ime {
    position: absolute;
    right: 450px;
    bottom: 4px;
    display: flex;
    align-items: center;
    width: 61px;
    height: 26px;
    justify-content: center;
    gap: 4px;
    border: 1px solid #888;
    border-radius: 5px;
    background: #fff;
    box-shadow: 0 1px 4px #0008;
    color: #222;
  }

  /* sheet tabs */
  .sheetbar {
    display: flex;
    align-items: center;
    height: 27px;
    font-size: 13px;
  }
  .sheet-nav {
    display: flex;
    justify-content: center;
    gap: 24px;
    width: 86px;
    margin-right: 14px;
  }
  .sheet-tab {
    align-self: flex-start;
    height: 24px;
    padding: 2px 2px 0 3px;
    border-left: 1px solid #999;
  }
  .sheet-tab span {
    height: 22px;
    padding: 0 9px;
    line-height: 20px;
  }
  .blue, .orange {
    color: #000;
  }
  .blue span {
    padding: 0 11px;
    background: #bdd7ee;
  }
  .orange span {
    background: #f4b084;
  }
  .sheet-tab.active {
    border-right: 1px solid #999;
    border-bottom: 2px solid #217346;
    background: #fff;
    color: #217346;
  }
  .active span {
    padding: 0 10px;
  }
  .add {
    margin-left: 33px;
  }
  .grip.push {
    margin-left: auto;
  }
  .hscroll {
    display: flex;
    width: 38%;
    height: 16px;
    margin-right: 17px;
    background: #dadada;
  }
  .hscroll button, .hscroll .thumb {
    width: 15px;
    border: 1px solid #ababab;
    background: #fff;
  }
  .hscroll .thumb {
    width: 86%;
  }
  .hscroll .end {
    margin-left: auto;
  }

  /* status bar */
  .status {
    display: flex;
    align-items: center;
    height: 18px;
    padding-left: 7px;
    border-top: 1px solid #c6c6c6;
    background: #f1f1f1;
  }
  .status > span + span {
    margin: 0 18px;
  }
  .views {
    display: flex;
    align-self: stretch;
    margin-left: auto;
    margin-right: 4px;
  }
  .views button {
    width: 38px;
  }
  .views .on {
    background: #c6c6c6;
  }
  input[type="range"] {
    width: 100px;
    height: 12px;
    margin: 0 3px;
    appearance: none;
    background: linear-gradient(#aaa, #aaa) center / 1px 7px no-repeat, linear-gradient(#aaa, #aaa) center / 100% 1px no-repeat;
  }
  input[type="range"]::-webkit-slider-thumb {
    width: 4px;
    height: 12px;
    appearance: none;
    background: #555;
  }
  .status .percent-value {
    margin: 0 15px;
  }

  .watermark {
    position: absolute;
    right: 8px;
    bottom: 6px;
    z-index: 5;
    display: flex;
    gap: 2px;
    opacity: 0.85;
    pointer-events: none;
  }
  .watermark div {
    display: flex;
    flex-direction: column;
  }
  .watermark strong {
    color: #3d86c6;
    font: 700 21px/24px "Noto Sans CJK SC", sans-serif;
  }
  .watermark em {
    color: #45ab55;
    font: 400 17px/20px "Liberation Sans", sans-serif;
  }
</style>
